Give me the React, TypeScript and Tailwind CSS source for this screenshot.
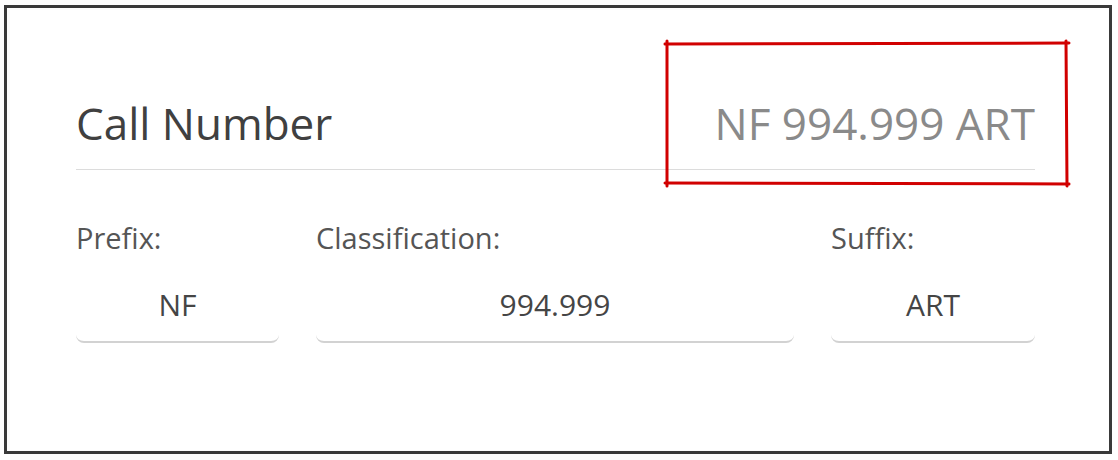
const fields = [
  { label: "Prefix:", value: "NF" },
  { label: "Classification:", value: "994.999" },
  { label: "Suffix:", value: "ART" },
];

export default function App() {
  return (
    <div
      className="relative w-[1118px] h-[460px] bg-white pl-[4px] pt-[5px]"
      style={{ fontFamily: '"Open Sans", "Noto Sans", sans-serif' }}
    >
      {/* sketch frame */}
      <div className="w-[1108px] h-[449px] border-[3px] border-[#3a3a3a] pl-[69px] pr-[74px] pt-[85px]">
        {/* header */}
        <div className="flex items-baseline justify-between border-b border-[#dcdcdc] pb-[16px]">
          <span className="text-[44px] leading-[60px] text-[#404040]">Call Number</span>
          <span className="text-[44px] leading-[60px] text-[#8a8a8a]">NF 994.999 ART</span>
        </div>

        {/* fields */}
        <div className="grid grid-cols-[203px_1fr_204px] gap-x-[37px] mt-[48px]">
          {fields.map((f) => (
            <div key={f.label} className="flex flex-col">
              <span className="text-[29px] leading-[40px] text-[#555]">{f.label}</span>
              <div className="mt-[26px] pb-[16px] text-center text-[30px] leading-[41px] text-[#454545] border-b-2 border-[#d2d2d2] rounded-b-[8px]">
                {f.value}
              </div>
            </div>
          ))}
        </div>
      </div>

      {/* red annotation box */}
      <svg className="absolute inset-0 pointer-events-none" width="1118" height="460">
        <g stroke="#d10000" strokeWidth="3" strokeLinecap="round" fill="none">
          <path d="M665 44 L1069 43" />
          <path d="M1066 41 L1067 186" />
          <path d="M665 183 L1069 184" />
          <path d="M667 41 L667 186" />
        </g>
      </svg>
    </div>
  );
}
